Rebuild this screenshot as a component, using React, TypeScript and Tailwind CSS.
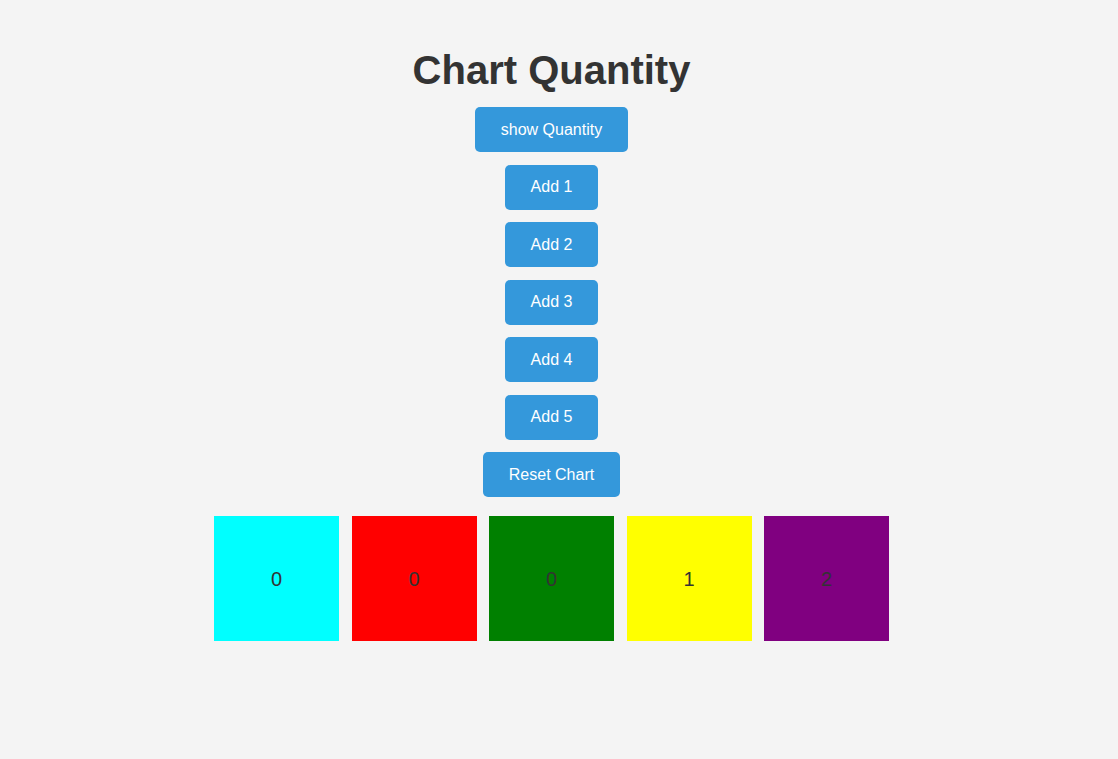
import { useState } from "react";

const colors = ["bg-[#00ffff]", "bg-[#ff0000]", "bg-[#008000]", "bg-[#ffff00]", "bg-[#800080]"];

export default function App() {
  const [counts, setCounts] = useState([0, 0, 0, 1, 2]);
  const [showQty, setShowQty] = useState(true);

  const add = (i: number) =>
    setCounts((c) => c.map((v, idx) => (idx === i ? v + 1 : v)));

  return (
    <div className="min-h-[759px] bg-[#f4f4f4] pr-[15px] font-['Liberation_Sans',Arial,sans-serif] text-[#333]">
      <div className="flex flex-col items-center pt-[47px]">
        <h1 className="text-[40px] font-bold leading-[46px]">Chart Quantity</h1>

        <div className="mt-[14px] flex flex-col items-center gap-[12.5px]">
          <button
            onClick={() => setShowQty(!showQty)}
            className="flex h-[45px] items-center rounded-[5px] bg-[#3498db] px-[26px] text-[16px] text-white"
          >
            show Quantity
          </button>
          {[1, 2, 3, 4, 5].map((n) => (
            <button
              key={n}
              onClick={() => add(n - 1)}
              className="flex h-[45px] items-center rounded-[5px] bg-[#3498db] px-[26px] text-[16px] text-white"
            >
              Add {n}
            </button>
          ))}
          <button
            onClick={() => setCounts([0, 0, 0, 0, 0])}
            className="flex h-[45px] items-center rounded-[5px] bg-[#3498db] px-[26px] text-[16px] text-white"
          >
            Reset Chart
          </button>
        </div>

        <div className="mt-[19px] flex gap-[12.5px]">
          {counts.map((v, i) => (
            <div
              key={i}
              className={`flex h-[125px] w-[125px] items-center justify-center text-[20px] text-[#333] ${colors[i]}`}
            >
              {showQty ? v : ""}
            </div>
          ))}
        </div>
      </div>
    </div>
  );
}
